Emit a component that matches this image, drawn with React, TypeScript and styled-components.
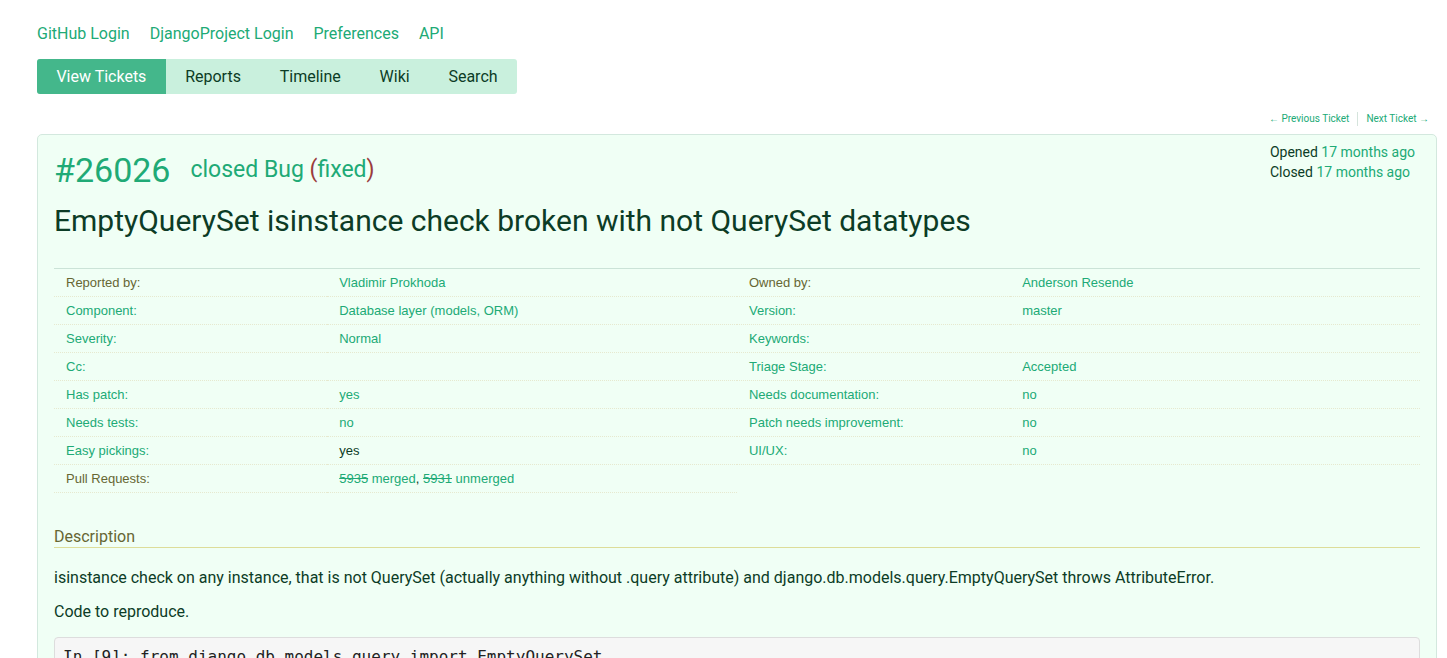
import React from "react";
import styled, { createGlobalStyle } from "styled-components";

const GREEN = "#20aa76";
const DARK = "#0c3c26";
const OLIVE = "#666633";

const Global = createGlobalStyle`
  html, body { margin: 0; padding: 0; background: #fff; }
  body { font-family: Roboto, "Liberation Sans", Arial, sans-serif; color: ${DARK}; }
  * { box-sizing: border-box; }
`;

const Page = styled.div`
  padding: 24px 10px 40px 37px;
`;

const MetaNav = styled.nav`
  display: flex;
  gap: 20px;
  font-size: 16px;
  line-height: 20px;
`;

const MetaLink = styled.a`
  color: ${GREEN};
  text-decoration: none;
`;

const MainNav = styled.nav`
  display: inline-flex;
  margin-top: 15px;
  background: #c9f0dd;
  border-radius: 3px;
  overflow: hidden;
`;

const NavItem = styled.a<{ $active?: boolean }>`
  display: block;
  padding: 0 19.4px;
  line-height: 35px;
  font-size: 16px;
  text-decoration: none;
  color: ${(p) => (p.$active ? "#fff" : DARK)};
  background: ${(p) => (p.$active ? "#44b78b" : "transparent")};
`;

const CtxNav = styled.div`
  display: flex;
  justify-content: flex-end;
  margin-top: 18px;
  padding-right: 8px;
  font-size: 10px;
  line-height: 14px;
`;

const CtxLink = styled.a<{ $sep?: boolean }>`
  color: ${GREEN};
  text-decoration: none;
  padding: 0 0 0 ${(p) => (p.$sep ? "8px" : "0")};
  margin-left: ${(p) => (p.$sep ? "8px" : "0")};
  border-left: ${(p) => (p.$sep ? "1px solid #d5e4dc" : "none")};
`;

const Ticket = styled.div`
  margin-top: 8px;
  background: #f0fff5;
  border: 1px solid #d3e8de;
  border-radius: 5px;
  padding: 7px 16px 0 16px;
`;

const TopRow = styled.div`
  display: flex;
  justify-content: space-between;
  align-items: flex-start;
`;

const TicketHead = styled.h2`
  margin: 8px 0 0 0;
  font-weight: normal;
  line-height: 40px;
  display: flex;
  align-items: center;
  gap: 20px;
`;

const TicketNum = styled.a`
  font-size: 34px;
  color: ${GREEN};
  text-decoration: none;
`;

const Status = styled.span`
  font-size: 23px;
  color: ${GREEN};
`;

const Paren = styled.span`
  color: #9a3c3c;
`;

const Dates = styled.div`
  font-size: 14px;
  line-height: 20px;
  padding-right: 5px;
  color: ${DARK};
`;

const Green = styled.a`
  color: ${GREEN};
  text-decoration: none;
`;

const Title = styled.h1`
  margin: 14px 0 0 0;
  font-size: 30px;
  line-height: 34px;
  font-weight: normal;
  color: ${DARK};
`;

const Props = styled.div`
  margin-top: 30px;
  border-top: 1px solid #cbe3d7;
  display: grid;
  grid-template-columns: 20% 30% 20% 30%;
  font-family: "Liberation Sans", Arial, sans-serif;
  font-size: 13px;
`;

const Cell = styled.div<{ $label?: boolean }>`
  padding: 0 12px;
  line-height: 27px;
  border-bottom: 1px dotted #e6e9cf;
  color: ${(p) => (p.$label ? OLIVE : DARK)};
  white-space: nowrap;
`;

const CellLink = styled.a<{ $strike?: boolean }>`
  color: ${GREEN};
  text-decoration: ${(p) => (p.$strike ? "line-through" : "none")};
`;

const Description = styled.div`
  margin-top: 34px;
`;

const DescHead = styled.h3`
  margin: 0;
  font-size: 16px;
  line-height: 20px;
  font-weight: normal;
  color: ${OLIVE};
  border-bottom: 1px solid #dddd99;
`;

const DescBody = styled.div`
  padding-top: 19px;
`;

const P = styled.p`
  margin: 0 0 12px 0;
  font-size: 16px;
  line-height: 22px;
  color: ${DARK};
`;

const Pre = styled.pre`
  margin: 14px 0 16px 0;
  padding: 8px 8px;
  background: #f6f6f6;
  border: 1px solid #dddddd;
  border-radius: 4px;
  font-family: "DejaVu Sans Mono", "Liberation Mono", monospace;
  font-size: 16px;
  line-height: 1.4;
  color: #222;
  overflow: hidden;
`;

type Row = [React.ReactNode, React.ReactNode];

const leftRows: Row[] = [
  ["Reported by:", <CellLink href="#">Vladimir Prokhoda</CellLink>],
  [<CellLink href="#">Component:</CellLink>, <CellLink href="#">Database layer (models, ORM)</CellLink>],
  [<CellLink href="#">Severity:</CellLink>, <CellLink href="#">Normal</CellLink>],
  [<CellLink href="#">Cc:</CellLink>, ""],
  [<CellLink href="#">Has patch:</CellLink>, <CellLink href="#">yes</CellLink>],
  [<CellLink href="#">Needs tests:</CellLink>, <CellLink href="#">no</CellLink>],
  [<CellLink href="#">Easy pickings:</CellLink>, "yes"],
  [
    "Pull Requests:",
    <>
      <CellLink href="#" $strike>5935</CellLink> <CellLink href="#">merged</CellLink>,{" "}
      <CellLink href="#" $strike>5931</CellLink> <CellLink href="#">unmerged</CellLink>
    </>,
  ],
];

const rightRows: Row[] = [
  ["Owned by:", <CellLink href="#">Anderson Resende</CellLink>],
  [<CellLink href="#">Version:</CellLink>, <CellLink href="#">master</CellLink>],
  [<CellLink href="#">Keywords:</CellLink>, ""],
  [<CellLink href="#">Triage Stage:</CellLink>, <CellLink href="#">Accepted</CellLink>],
  [<CellLink href="#">Needs documentation:</CellLink>, <CellLink href="#">no</CellLink>],
  [<CellLink href="#">Patch needs improvement:</CellLink>, <CellLink href="#">no</CellLink>],
  [<CellLink href="#">UI/UX:</CellLink>, <CellLink href="#">no</CellLink>],
];

export default function App() {
  const cells: React.ReactNode[] = [];
  leftRows.forEach((l, i) => {
    cells.push(<Cell key={`l${i}`} $label>{l[0]}</Cell>);
    cells.push(<Cell key={`lv${i}`}>{l[1]}</Cell>);
    const r = rightRows[i];
    if (r) {
      cells.push(<Cell key={`r${i}`} $label>{r[0]}</Cell>);
      cells.push(<Cell key={`rv${i}`}>{r[1]}</Cell>);
    }
  });

  return (
    <>
      <Global />
      <Page>
        <MetaNav>
          <MetaLink href="#">GitHub Login</MetaLink>
          <MetaLink href="#">DjangoProject Login</MetaLink>
          <MetaLink href="#">Preferences</MetaLink>
          <MetaLink href="#">API</MetaLink>
        </MetaNav>
        <MainNav>
          <NavItem href="#" $active>View Tickets</NavItem>
          <NavItem href="#">Reports</NavItem>
          <NavItem href="#">Timeline</NavItem>
          <NavItem href="#">Wiki</NavItem>
          <NavItem href="#">Search</NavItem>
        </MainNav>
        <CtxNav>
          <CtxLink href="#">← Previous Ticket</CtxLink>
          <CtxLink href="#" $sep>Next Ticket →</CtxLink>
        </CtxNav>
        <Ticket>
          <TopRow>
            <TicketHead>
              <TicketNum href="#">#26026</TicketNum>
              <Status>
                closed Bug <Paren>(</Paren>fixed<Paren>)</Paren>
              </Status>
            </TicketHead>
            <Dates>
              <div>Opened <Green href="#">17 months ago</Green></div>
              <div>Closed <Green href="#">17 months ago</Green></div>
            </Dates>
          </TopRow>
          <Title>EmptyQuerySet isinstance check broken with not QuerySet datatypes</Title>
          <Props>{cells}</Props>
          <Description>
            <DescHead>Description</DescHead>
            <DescBody>
              <P>
                isinstance check on any instance, that is not QuerySet (actually anything without .query
                attribute) and django.db.models.query.EmptyQuerySet throws AttributeError.
              </P>
              <P>Code to reproduce.</P>
              <Pre>{`In [9]: from django.db.models.query import EmptyQuerySet

In [10]: isinstance(42, EmptyQuerySet)
---------------------------------------------------------------------------
AttributeError                            Traceback (most recent call last)`}</Pre>
            </DescBody>
          </Description>
        </Ticket>
      </Page>
    </>
  );
}
